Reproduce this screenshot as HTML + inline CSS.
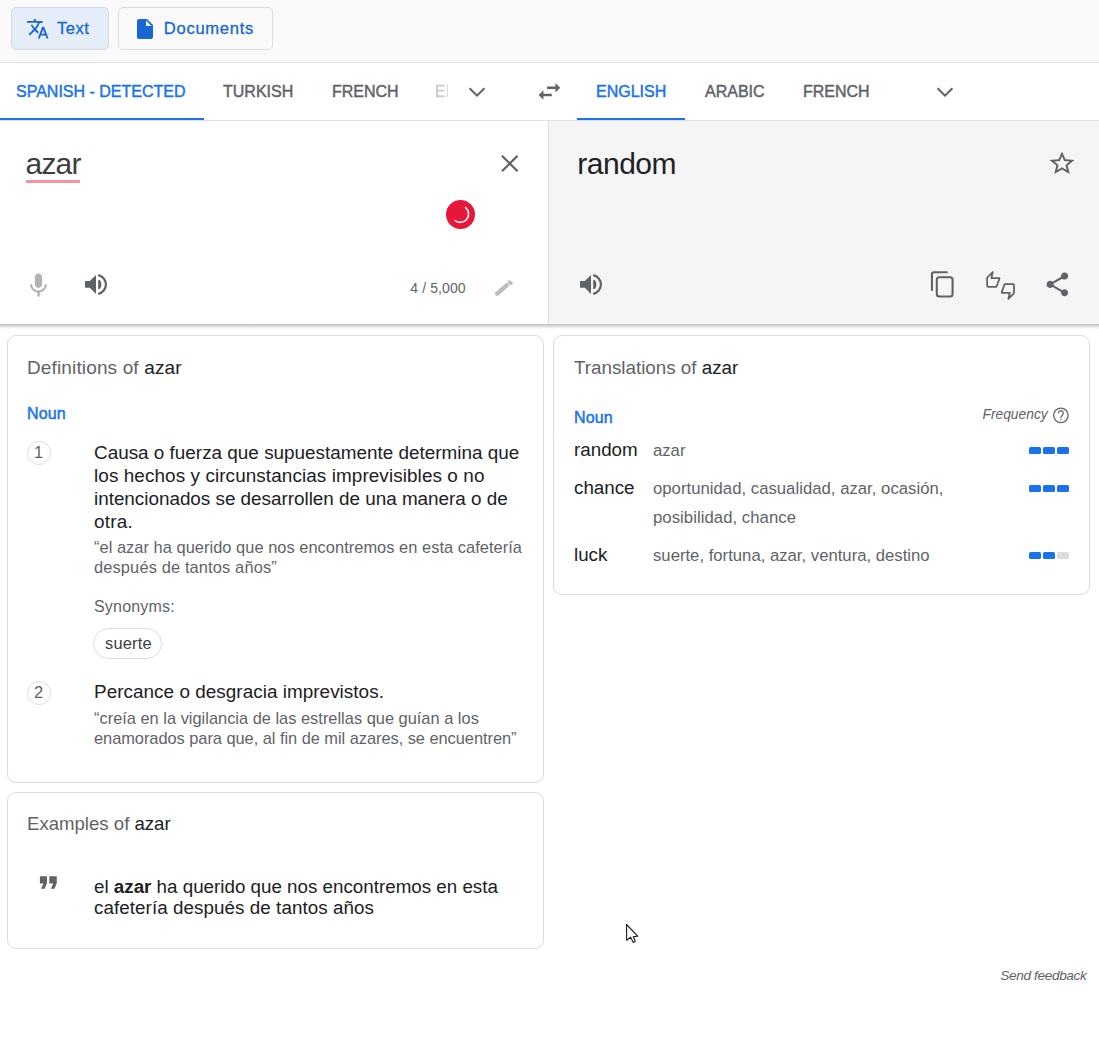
<!DOCTYPE html>
<html><head><meta charset="utf-8"><style>
html,body{margin:0;padding:0;background:#fff;width:1099px;height:1038px;overflow:hidden;position:relative}
.t{position:absolute;white-space:nowrap;line-height:1;font-family:"Liberation Sans",sans-serif}
svg{display:block}
</style></head><body>
<div style="position:absolute;left:0px;top:0px;width:1099px;height:62px;background:#fafafa"></div>
<div style="position:absolute;left:0px;top:62px;width:1099px;height:1px;background:#e0e0e0"></div>
<div style="position:absolute;left:11px;top:7px;width:98px;height:43px;background:#e5edf9;border:1px solid #d5d9e0;border-radius:5px;box-sizing:border-box"></div>
<div style="position:absolute;left:118px;top:7px;width:155px;height:43px;background:#fafafa;border:1px solid #dadce0;border-radius:5px;box-sizing:border-box"></div>
<div class="t" style="left:57px;top:20.95px;font-size:16.6px;color:#1967d2;font-weight:400;letter-spacing:0.5px;font-style:normal;-webkit-text-stroke:0.3px #1967d2">Text</div>
<div class="t" style="left:163.8px;top:20.95px;font-size:16.6px;color:#1967d2;font-weight:400;letter-spacing:0.7px;font-style:normal;-webkit-text-stroke:0.3px #1967d2">Documents</div>
<svg style="position:absolute;left:25.5px;top:17px" width="23.5" height="23.5" viewBox="0 0 24 24"><path fill="#1967d2" d="M12.87 15.07l-2.54-2.51.03-.03A17.52 17.52 0 0014.07 6H17V4h-7V2H8v2H1v1.99h11.17C11.5 7.92 10.44 9.75 9 11.35 8.07 10.32 7.3 9.19 6.69 8h-2c.73 1.63 1.73 3.17 2.98 4.56l-5.09 5.02L4 19l5-5 3.11 3.11.76-2.04zM18.5 10h-2L12 22h2l1.12-3h4.75L21 22h2l-4.5-12zm-2.62 7l1.62-4.33L19.12 17h-3.24z"/></svg>
<svg style="position:absolute;left:132.7px;top:16.9px" width="24" height="24" viewBox="0 0 24 24"><path fill="#1967d2" d="M6 2c-1.1 0-1.99.9-1.99 2L4 20c0 1.1.89 2 1.99 2H18c1.1 0 2-.9 2-2V8l-6-6H6zm7 7V3.5L18.5 9H13z"/></svg>
<div style="position:absolute;left:0px;top:63px;width:1099px;height:57px;background:#fff"></div>
<div style="position:absolute;left:0px;top:120px;width:1099px;height:1px;background:#e0e0e0"></div>
<div class="t" style="left:16px;top:84.46px;font-size:16px;color:#1a73e8;font-weight:400;letter-spacing:0px;font-style:normal;-webkit-text-stroke:0.45px #1a73e8">SPANISH - DETECTED</div>
<div style="position:absolute;left:0px;top:118px;width:204px;height:2px;background:#1a73e8"></div>
<div class="t" style="left:223px;top:84.46px;font-size:16px;color:#5f6368;font-weight:400;letter-spacing:0px;font-style:normal;-webkit-text-stroke:0.45px #5f6368">TURKISH</div>
<div class="t" style="left:332px;top:84.46px;font-size:16px;color:#5f6368;font-weight:400;letter-spacing:0px;font-style:normal;-webkit-text-stroke:0.45px #5f6368">FRENCH</div>
<div style="position:absolute;left:435px;top:80px;width:13px;height:22px;overflow:hidden"><div class="t" style="left:0;top:4.46px;font-size:16px;-webkit-text-stroke:0.45px transparent"><span style="background:linear-gradient(90deg,#c0c2c5,#e8e9ea);-webkit-background-clip:text;color:transparent">EN</span></div></div>
<svg style="position:absolute;left:466px;top:82px" width="22" height="22" viewBox="0 0 22 22"><path fill="none" stroke="#5f6368" stroke-width="2" d="M3.6 6.2L11 13.6L18.4 6.2"/></svg>
<svg style="position:absolute;left:534.6px;top:77px" width="28.8" height="28.8" viewBox="0 0 24 24"><path fill="#5f6368" d="M6.99 11L3 15l3.99 4v-3H14v-2H6.99v-3zM21 9l-3.99-4v3H10v2h7.01v3L21 9z"/></svg>
<div class="t" style="left:596px;top:84.46px;font-size:16px;color:#1a73e8;font-weight:400;letter-spacing:0px;font-style:normal;-webkit-text-stroke:0.45px #1a73e8">ENGLISH</div>
<div style="position:absolute;left:577px;top:118px;width:108px;height:2px;background:#1a73e8"></div>
<div class="t" style="left:705px;top:84.46px;font-size:16px;color:#5f6368;font-weight:400;letter-spacing:0px;font-style:normal;-webkit-text-stroke:0.45px #5f6368">ARABIC</div>
<div class="t" style="left:803px;top:84.46px;font-size:16px;color:#5f6368;font-weight:400;letter-spacing:0px;font-style:normal;-webkit-text-stroke:0.45px #5f6368">FRENCH</div>
<svg style="position:absolute;left:934px;top:82px" width="22" height="22" viewBox="0 0 22 22"><path fill="none" stroke="#5f6368" stroke-width="2" d="M3.6 6.2L11 13.6L18.4 6.2"/></svg>
<div style="position:absolute;left:0px;top:121px;width:548px;height:203px;background:#fff"></div>
<div style="position:absolute;left:548px;top:121px;width:1px;height:203px;background:#dddddd"></div>
<div style="position:absolute;left:549px;top:121px;width:550px;height:203px;background:#f5f5f5"></div>
<div style="position:absolute;left:0px;top:323.5px;width:1099px;height:5px;background:linear-gradient(#c4c4c4,#cccccc 25%,#e6e6e6 55%,#fdfdfd)"></div>
<div class="t" style="left:25.5px;top:148.60px;font-size:30px;color:#3c4043;font-weight:400;letter-spacing:-0.8px;font-style:normal;">azar</div>
<div style="position:absolute;left:26px;top:180px;width:54px;height:3px;background:#fb8fa0"></div>
<svg style="position:absolute;left:498px;top:152px" width="24" height="24" viewBox="0 0 24 24"><path fill="none" stroke="#5f6368" stroke-width="2.2" d="M4 3.7L19.6 19.3M19.6 3.7L4 19.3"/></svg>
<svg style="position:absolute;left:445px;top:198.7px" width="31" height="31" viewBox="0 0 31 31"><circle cx="15.5" cy="15.5" r="14.5" fill="#e8173a"/><path fill="none" stroke="#fff" stroke-width="1.6" stroke-linecap="round" d="M20.5 8.5A8 8 0 0 1 10 21.5"/></svg>
<svg style="position:absolute;left:24px;top:270.8px" width="29" height="29" viewBox="0 0 24 24"><path fill="#b0b3b6" d="M12 14c1.66 0 2.99-1.34 2.99-3L15 5c0-1.66-1.34-3-3-3S9 3.34 9 5v6c0 1.66 1.34 3 3 3zm5.3-3c0 3-2.54 5.1-5.3 5.1S6.7 14 6.7 11H5c0 3.41 2.72 6.23 6 6.72V21h2v-3.28c3.28-.48 6-3.3 6-6.72h-1.7z"/></svg>
<svg style="position:absolute;left:84.8px;top:272px" width="26" height="26" viewBox="0 0 26 26"><path fill="#5f6368" d="M0 9H4.8L11 2.9V22L4.8 15.8H0Z"/><path fill="#5f6368" d="M13.2 7.7A3.1 4.7 0 0 1 13.2 17.1Z"/><path fill="none" stroke="#5f6368" stroke-width="2.2" d="M13.2 3.12A9.56 9.56 0 0 1 13.2 21.88"/></svg>
<div class="t" style="left:410.3px;top:281.15px;font-size:14px;color:#5f6368;font-weight:400;letter-spacing:0.1px;font-style:normal;">4 / 5,000</div>
<svg style="position:absolute;left:488px;top:272px" width="32" height="32" viewBox="0 0 32 32"><g stroke="#bdbdbd" stroke-linecap="round" fill="none" style="filter:blur(0.35px)"><path stroke-width="4.4" d="M9.2 21.6L18.6 13.4"/><path stroke-width="3.4" d="M21.3 10.0L23 11.3"/></g></svg>
<div class="t" style="left:577.3px;top:148.60px;font-size:30px;color:#202124;font-weight:400;letter-spacing:-0.5px;font-style:normal;">random</div>
<svg style="position:absolute;left:1047px;top:149.2px" width="30" height="28.5" viewBox="0 0 24 24" preserveAspectRatio="none"><path fill="#5f6368" d="M22 9.24l-7.19-.62L12 2 9.19 8.63 2 9.24l5.46 4.73L5.82 21 12 17.27 18.18 21l-1.63-7.03L22 9.24zM12 15.4l-3.76 2.27 1-4.28-3.32-2.88 4.38-.38L12 6.1l1.71 4.04 4.38.38-3.32 2.88 1 4.28L12 15.4z"/></svg>
<svg style="position:absolute;left:579.9px;top:272px" width="26" height="26" viewBox="0 0 26 26"><path fill="#5f6368" d="M0 9H4.8L11 2.9V22L4.8 15.8H0Z"/><path fill="#5f6368" d="M13.2 7.7A3.1 4.7 0 0 1 13.2 17.1Z"/><path fill="none" stroke="#5f6368" stroke-width="2.2" d="M13.2 3.12A9.56 9.56 0 0 1 13.2 21.88"/></svg>
<svg style="position:absolute;left:925px;top:265px" width="35" height="37" viewBox="0 0 35 37"><g fill="none" stroke="#5f6368" stroke-width="2.1"><path stroke-linecap="round" d="M6.95 25.1V9.3a2 2 0 0 1 2-2H21.9"/><rect x="11.8" y="12.3" width="15.8" height="19.2" rx="2.5"/></g></svg>
<svg style="position:absolute;left:982px;top:266px" width="38" height="38" viewBox="0 0 38 38"><g fill="none" stroke="#5f6368" stroke-width="1.75" stroke-linejoin="round"><path d="M9.34 12L10.8 6L5.13 11.7V19.9Q5.13 20.8 6 20.8H14.47L17.5 12.45Q17.5 12 17.1 12Z"/><path d="M27.8 26.82L26.34 32.82L32.01 27.12V18.92Q32.01 18.02 31.14 18.02H22.67L19.64 26.37Q19.64 26.82 20.04 26.82Z"/></g></svg>
<svg style="position:absolute;left:1043.2px;top:270px" width="28.8" height="28.8" viewBox="0 0 24 24"><path fill="#5f6368" d="M18 16.08c-.76 0-1.44.3-1.96.77L8.91 12.7c.05-.23.09-.46.09-.7s-.04-.47-.09-.7l7.05-4.11c.54.5 1.25.81 2.04.81 1.66 0 3-1.34 3-3s-1.34-3-3-3-3 1.34-3 3c0 .24.04.47.09.7L8.04 9.81C7.5 9.31 6.79 9 6 9c-1.66 0-3 1.34-3 3s1.34 3 3 3c.79 0 1.5-.31 2.04-.81l7.12 4.16c-.05.21-.08.43-.08.65 0 1.61 1.31 2.92 2.92 2.92 1.61 0 2.92-1.31 2.92-2.92s-1.31-2.92-2.92-2.92z"/></svg>
<div style="position:absolute;left:7px;top:335px;width:537px;height:448px;border:1px solid #dadce0;border-radius:9px;box-sizing:border-box"></div>
<div style="position:absolute;left:553px;top:335px;width:537px;height:260px;border:1px solid #dadce0;border-radius:9px;box-sizing:border-box"></div>
<div style="position:absolute;left:7px;top:792px;width:537px;height:157px;border:1px solid #dadce0;border-radius:9px;box-sizing:border-box"></div>
<div class="t" style="left:27px;top:357.62px;font-size:19px;color:#5f6368;font-weight:400;letter-spacing:0.139px;font-style:normal;">Definitions of <span style="color:#202124">azar</span></div>
<div class="t" style="left:27px;top:406.26px;font-size:16px;color:#1a73e8;font-weight:400;letter-spacing:0.15px;font-style:normal;-webkit-text-stroke:0.5px #1a73e8">Noun</div>
<div style="position:absolute;left:27px;top:441px;width:23.6px;height:23.6px;border:1px solid #dadce0;border-radius:50%;box-sizing:border-box"></div>
<div class="t" style="left:33.9px;top:444.03px;font-size:16.5px;color:#5f6368;font-weight:400;letter-spacing:0px;font-style:normal;">1</div>
<div class="t" style="left:94px;top:443.80px;font-size:18.9px;color:#202124;font-weight:400;letter-spacing:0.0px;font-style:normal;">Causa o fuerza que supuestamente determina que</div>
<div class="t" style="left:94px;top:466.80px;font-size:18.9px;color:#202124;font-weight:400;letter-spacing:0.089px;font-style:normal;">los hechos y circunstancias imprevisibles o no</div>
<div class="t" style="left:94px;top:489.80px;font-size:18.9px;color:#202124;font-weight:400;letter-spacing:-0.024px;font-style:normal;">intencionados se desarrollen de una manera o de</div>
<div class="t" style="left:94px;top:512.80px;font-size:18.9px;color:#202124;font-weight:400;letter-spacing:0.25px;font-style:normal;">otra.</div>
<div class="t" style="left:94px;top:538.62px;font-size:16.4px;color:#5f6368;font-weight:400;letter-spacing:0.042px;font-style:normal;">“el azar ha querido que nos encontremos en esta cafetería</div>
<div class="t" style="left:94px;top:558.62px;font-size:16.4px;color:#5f6368;font-weight:400;letter-spacing:0.145px;font-style:normal;">después de tantos años”</div>
<div class="t" style="left:94px;top:598.96px;font-size:16px;color:#5f6368;font-weight:400;letter-spacing:0.2px;font-style:normal;">Synonyms:</div>
<div style="position:absolute;left:93px;top:628px;width:69px;height:31px;border:1px solid #dadce0;border-radius:16px;box-sizing:border-box"></div>
<div class="t" style="left:105px;top:634.82px;font-size:16.4px;color:#3c4043;font-weight:400;letter-spacing:0.2px;font-style:normal;">suerte</div>
<div style="position:absolute;left:27px;top:681px;width:23.6px;height:23.6px;border:1px solid #dadce0;border-radius:50%;box-sizing:border-box"></div>
<div class="t" style="left:33.9px;top:684.03px;font-size:16.5px;color:#5f6368;font-weight:400;letter-spacing:0px;font-style:normal;">2</div>
<div class="t" style="left:94px;top:683.20px;font-size:18.9px;color:#202124;font-weight:400;letter-spacing:0.036px;font-style:normal;">Percance o desgracia imprevistos.</div>
<div class="t" style="left:94px;top:709.82px;font-size:16.4px;color:#5f6368;font-weight:400;letter-spacing:0.006px;font-style:normal;">“creía en la vigilancia de las estrellas que guían a los</div>
<div class="t" style="left:94px;top:729.62px;font-size:16.4px;color:#5f6368;font-weight:400;letter-spacing:-0.036px;font-style:normal;">enamorados para que, al fin de mil azares, se encuentren”</div>
<div class="t" style="left:574px;top:358.99px;font-size:18.8px;color:#5f6368;font-weight:400;letter-spacing:0.0px;font-style:normal;">Translations of <span style="color:#202124">azar</span></div>
<div class="t" style="left:574px;top:409.96px;font-size:16px;color:#1a73e8;font-weight:400;letter-spacing:0.15px;font-style:normal;-webkit-text-stroke:0.5px #1a73e8">Noun</div>
<div class="t" style="left:982.5px;top:408.02px;font-size:13.8px;color:#5f6368;font-weight:400;letter-spacing:0px;font-style:italic;">Frequency</div>
<svg style="position:absolute;left:1050px;top:404px" width="22" height="22" viewBox="0 0 22 22"><g fill="none" stroke="#5f6368" stroke-width="1.3"><circle cx="10.9" cy="11.3" r="7.25"/><path stroke-width="1.25" d="M8.4 9.4A2.45 2.45 0 1 1 12.6 10.9C11.6 11.9 10.9 12.3 10.9 13.9"/></g><circle cx="10.9" cy="15.5" r="0.75" fill="#5f6368"/></svg>
<div class="t" style="left:574px;top:441.29px;font-size:18.8px;color:#202124;font-weight:400;letter-spacing:0px;font-style:normal;">random</div>
<div class="t" style="left:653px;top:442.66px;font-size:16.7px;color:#5f6368;font-weight:400;letter-spacing:0px;font-style:normal;">azar</div>
<div class="t" style="left:574px;top:479.19px;font-size:18.8px;color:#202124;font-weight:400;letter-spacing:0px;font-style:normal;">chance</div>
<div class="t" style="left:653px;top:480.96px;font-size:16.7px;color:#5f6368;font-weight:400;letter-spacing:0.026px;font-style:normal;">oportunidad, casualidad, azar, ocasión,</div>
<div class="t" style="left:653px;top:509.76px;font-size:16.7px;color:#5f6368;font-weight:400;letter-spacing:0.056px;font-style:normal;">posibilidad, chance</div>
<div class="t" style="left:574px;top:545.79px;font-size:18.8px;color:#202124;font-weight:400;letter-spacing:0px;font-style:normal;">luck</div>
<div class="t" style="left:653px;top:547.56px;font-size:16.7px;color:#5f6368;font-weight:400;letter-spacing:0.004px;font-style:normal;">suerte, fortuna, azar, ventura, destino</div>
<div style="position:absolute;left:1029px;top:447px;width:12px;height:7px;background:#1a73e8;border-radius:1.5px"></div>
<div style="position:absolute;left:1043px;top:447px;width:12px;height:7px;background:#1a73e8;border-radius:1.5px"></div>
<div style="position:absolute;left:1057px;top:447px;width:12px;height:7px;background:#1a73e8;border-radius:1.5px"></div>
<div style="position:absolute;left:1029px;top:485px;width:12px;height:7px;background:#1a73e8;border-radius:1.5px"></div>
<div style="position:absolute;left:1043px;top:485px;width:12px;height:7px;background:#1a73e8;border-radius:1.5px"></div>
<div style="position:absolute;left:1057px;top:485px;width:12px;height:7px;background:#1a73e8;border-radius:1.5px"></div>
<div style="position:absolute;left:1029px;top:552px;width:12px;height:7px;background:#1a73e8;border-radius:1.5px"></div>
<div style="position:absolute;left:1043px;top:552px;width:12px;height:7px;background:#1a73e8;border-radius:1.5px"></div>
<div style="position:absolute;left:1057px;top:552px;width:12px;height:7px;background:#dadce0;border-radius:1.5px"></div>
<div class="t" style="left:27px;top:814.76px;font-size:18.6px;color:#5f6368;font-weight:400;letter-spacing:0.0px;font-style:normal;">Examples of <span style="color:#202124">azar</span></div>
<svg style="position:absolute;left:37px;top:872px" width="22" height="20" viewBox="0 0 22 20"><path fill="#5f6368" d="M2.9 4.2H10V11L7.7 16.8H4L6.5 11.4H2.9ZM12.3 4.2H19.8V11L17.5 16.8H13.8L16.3 11.4H12.3Z"/></svg>
<div class="t" style="left:94px;top:877.79px;font-size:18.8px;color:#202124;font-weight:400;letter-spacing:-0.004px;font-style:normal;">el <b>azar</b> ha querido que nos encontremos en esta</div>
<div class="t" style="left:94px;top:899.39px;font-size:18.8px;color:#202124;font-weight:400;letter-spacing:0.07px;font-style:normal;">cafetería después de tantos años</div>
<svg style="position:absolute;left:625px;top:923px" width="16" height="24" viewBox="0 0 16 24"><path fill="#fff" stroke="#1a1a22" stroke-width="1.1" stroke-linejoin="round" d="M1.5 1.5L1.7 17.3L5.6 14.2L8.3 19.5L10.3 18.3L8.3 13.8L12.7 13.1Z"/></svg>
<div class="t" style="left:1000.3px;top:969.49px;font-size:13.6px;color:#5f6368;font-weight:400;letter-spacing:-0.35px;font-style:italic;">Send feedback</div>
</body></html>
